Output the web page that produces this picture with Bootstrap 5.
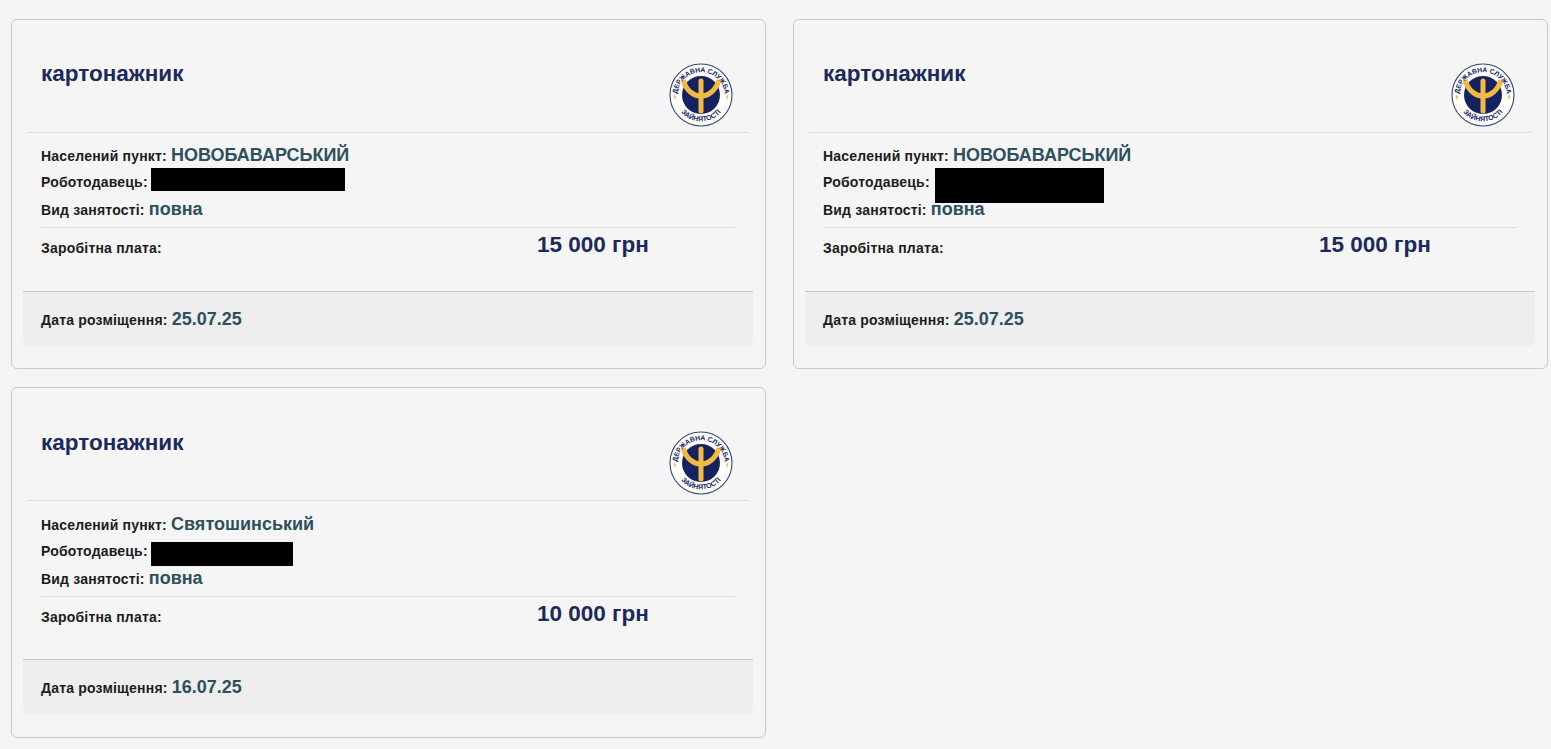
<!DOCTYPE html>
<html lang="uk">
<head>
<meta charset="UTF-8">
<title>Вакансії</title>
<link href="https://cdn.jsdelivr.net/npm/bootstrap@5.3.0/dist/css/bootstrap.min.css" rel="stylesheet">
<style>
body { background: #f5f5f5; font-family: "Liberation Sans", Arial, sans-serif; color: #1c1c1c; }
.vac-grid { display: grid; grid-template-columns: 755px 755px; column-gap: 27px; row-gap: 18px; padding: 19px 0 0 11px; }
.vac-card { background: #f5f5f5; border: 1px solid #c9c9c9; border-radius: 6px; padding: 0 12px 22px 11px; height: 350px; }
.vac-card-tall { height: 351px; }
.vac-head { margin: 0 4px; height: 113px; border-bottom: 1px solid #dcdcdc; padding: 0 16px 0 14px; }
.vac-title { font-size: 22.5px; font-weight: 700; color: #1b2a5b; margin: 42px 0 0; line-height: 24px; }
.vac-card-tall .vac-title { margin-top: 43px; }
.vac-logo { margin-top: 43px; }
.vac-body { padding: 10px 18px 0 18px; height: 158px; }
.vac-card-tall .vac-body { padding-top: 11px; }
.vac-line { height: 27px; font-size: 14px; font-weight: 700; letter-spacing: .2px; line-height: 24px; white-space: nowrap; }
.vac-val { font-size: 18px; color: #2d4f5e; letter-spacing: 0; }
.vac-hide { display: inline-block; background: #000; vertical-align: top; margin-top: -2px; }
.hide-a { width: 194px; height: 23px; margin-left: -1px; }
.hide-b { width: 169px; height: 35px; margin-left: 1px; }
.hide-c { width: 142px; height: 24px; margin-top: 3px; margin-left: -1px; }
.vac-pay { display: grid; grid-template-columns: 496px 1fr; border-top: 1px solid #dcdcdc; margin-top: 3px; padding-top: 3px; font-size: 14px; font-weight: 700; letter-spacing: .2px; }
.vac-pay-label { line-height: 35px; }
.vac-sum { font-size: 22.5px; color: #1b2a5b; line-height: 28px; letter-spacing: 0; }
.vac-foot { background: #eeeeee; border-top: 1px solid #c9c9c9; border-radius: 0 0 6px 6px; height: 55px; padding: 0 18px; font-size: 14px; font-weight: 700; letter-spacing: .2px; line-height: 55px; }
</style>
</head>
<body>
<svg width="0" height="0" class="d-block">
  <defs>
    <symbol id="dsz-logo" viewBox="0 0 64 64">
      <circle cx="32" cy="32" r="31" fill="#fff" stroke="#3a4474" stroke-width="1.1"/>
      <circle cx="32" cy="32" r="19" fill="#14235f"/>
      <path d="M14 17C17 27 24 33 32 33C40 33 47 27 50 17" fill="none" stroke="#f4b942" stroke-width="5"/>
      <path d="M32 18V48" fill="none" stroke="#f4b942" stroke-width="5" stroke-linecap="round"/>
      <path d="M5.500 31l1.500 3-1 3-1.500-3zM58.500 31l-1.500 3 1 3 1.500-3z" fill="#e8c35a"/>
      <path id="dsz-top" d="M9 40A24 24 0 1 1 55 40" fill="none"/>
      <path id="dsz-bot" d="M8 43A26.500 26.500 0 0 0 56 43" fill="none"/>
      <text font-family="Liberation Sans" font-size="6.800" font-weight="700" fill="#14235f"><textPath href="#dsz-top" startOffset="50%" text-anchor="middle">ДЕРЖАВНА СЛУЖБА</textPath></text>
      <text font-family="Liberation Sans" font-size="7" font-weight="700" fill="#14235f"><textPath href="#dsz-bot" startOffset="50%" text-anchor="middle">ЗАЙНЯТОСТІ</textPath></text>
    </symbol>
  </defs>
</svg>
<div class="vac-grid">

  <div class="vac-card">
    <div class="vac-head d-flex justify-content-between align-items-start">
      <h5 class="vac-title">картонажник</h5>
      <svg class="vac-logo" width="64" height="64"><use href="#dsz-logo"/></svg>
    </div>
    <div class="vac-body">
      <div class="vac-line">Населений пункт: <span class="vac-val">НОВОБАВАРСЬКИЙ</span></div>
      <div class="vac-line">Роботодавець: <span class="vac-hide hide-a"></span></div>
      <div class="vac-line">Вид занятості: <span class="vac-val">повна</span></div>
      <div class="vac-pay"><div class="vac-pay-label">Заробітна плата:</div><div class="vac-sum">15 000 грн</div></div>
    </div>
    <div class="vac-foot">Дата розміщення: <span class="vac-val">25.07.25</span></div>
  </div>

  <div class="vac-card">
    <div class="vac-head d-flex justify-content-between align-items-start">
      <h5 class="vac-title">картонажник</h5>
      <svg class="vac-logo" width="64" height="64"><use href="#dsz-logo"/></svg>
    </div>
    <div class="vac-body">
      <div class="vac-line">Населений пункт: <span class="vac-val">НОВОБАВАРСЬКИЙ</span></div>
      <div class="vac-line">Роботодавець: <span class="vac-hide hide-b"></span></div>
      <div class="vac-line">Вид занятості: <span class="vac-val">повна</span></div>
      <div class="vac-pay"><div class="vac-pay-label">Заробітна плата:</div><div class="vac-sum">15 000 грн</div></div>
    </div>
    <div class="vac-foot">Дата розміщення: <span class="vac-val">25.07.25</span></div>
  </div>

  <div class="vac-card vac-card-tall">
    <div class="vac-head d-flex justify-content-between align-items-start">
      <h5 class="vac-title">картонажник</h5>
      <svg class="vac-logo" width="64" height="64"><use href="#dsz-logo"/></svg>
    </div>
    <div class="vac-body">
      <div class="vac-line">Населений пункт: <span class="vac-val">Святошинський</span></div>
      <div class="vac-line">Роботодавець: <span class="vac-hide hide-c"></span></div>
      <div class="vac-line">Вид занятості: <span class="vac-val">повна</span></div>
      <div class="vac-pay"><div class="vac-pay-label">Заробітна плата:</div><div class="vac-sum">10 000 грн</div></div>
    </div>
    <div class="vac-foot">Дата розміщення: <span class="vac-val">16.07.25</span></div>
  </div>

</div>
<script src="https://cdn.jsdelivr.net/npm/bootstrap@5.3.0/dist/js/bootstrap.bundle.min.js"></script>
</body>
</html>
